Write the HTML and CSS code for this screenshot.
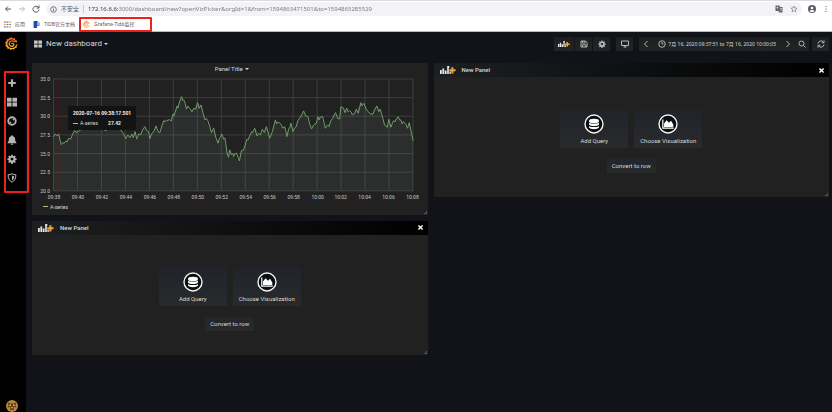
FILE: index.html
```html
<!DOCTYPE html>
<html lang="zh-CN">
<head>
<meta charset="utf-8">
<title>New dashboard - Grafana</title>
<link rel="stylesheet" href="styles.css">
</head>
<body>
<svg class="defs" aria-hidden="true">
  <symbol id="add-panel" viewBox="0 0 20 10">
    <path fill="#e8e8e8" d="M0 5h2.200v5H0zM3 3h2.200v7H3zM6 5.500h2.200V10H6zM9 2h2v8H9zM11.800 7h1.700v3h-1.700z"/>
    <path fill="#f0a630" d="M14.200 1.500h2.600v2.700h2.700v2.400h-2.700v2.700h-2.600V6.600h-2.600V4.200h2.600z"/>
    <path fill="#e8e8e8" d="M9 0h2.600v2.600H9z"/>
  </symbol>
  <symbol id="grafana" viewBox="0 0 24 24">
    <path fill="url(#flame)" d="M12 0l2.500 2.800L18 1.800l1 3.600 3.600 1.400-1 3.400L24 13l-2.500 2.700.5 3.500-3.500.9-1.700 3.200-3.200-1.100L10.500 24l-2.400-2.600-3.600.4-.8-3.500L.6 16.500l1.200-3.300L0 10l2.800-2.200.2-3.600 3.600-.3L8.500.8l2.400 1z"/>
    <circle class="logo-cut" cx="12.500" cy="12.500" r="8"/>
    <path fill="none" stroke="url(#flame)" stroke-width="2.400" d="M18.500 9.500C16 6 10 6.200 8.200 10c-1.700 4 1 7.300 4.300 7.300 2.700 0 4.200-2 3.800-3.900-.5-1.900-2.900-2.400-4.300-.9"/>
    <path class="logo-cut" d="M18.500 10.500L24 9.500v4l-5 .5z"/>
  </symbol>
  <symbol id="database" viewBox="0 0 20 20">
    <circle cx="10" cy="10" r="9" fill="#0d0e10" stroke="#f2f2f2" stroke-width="1.400"/>
    <ellipse cx="10" cy="7" rx="5" ry="2.200" fill="#fff"/>
    <path fill="#fff" d="M5 8.600c1.500 1.600 8.500 1.600 10 0v2c-1.500 2-8.500 2-10 0zM5 11.900c1.500 1.600 8.500 1.600 10 0v1.700c-1.500 2.200-8.500 2.200-10 0z"/>
  </symbol>
  <symbol id="graph" viewBox="0 0 20 20">
    <circle cx="10" cy="10" r="9" fill="#0d0e10" stroke="#f2f2f2" stroke-width="1.400"/>
    <path fill="#fff" d="M4.200 5.500h1.200v8h10.400v1.200H4.200z"/>
    <path fill="#fff" d="M6 12.900V9.500l2.600-3.200 2.400 2.500 2-2 2.300 3.600v2.500z"/>
  </symbol>
  <symbol id="gear" viewBox="0 0 16 16">
    <path fill="currentColor" fill-rule="evenodd" d="M6.800 1h2.400l.4 2 1.100.5 1.700-1.200 1.700 1.700-1.200 1.700.5 1.100 2 .4v2.400l-2 .4-.5 1.100 1.200 1.700-1.700 1.700-1.700-1.200-1.100.5-.4 2H6.800l-.4-2-1.100-.5-1.700 1.200-1.700-1.700 1.200-1.700-.5-1.100-2-.4V7.200l2-.4.5-1.100L1.900 4l1.700-1.700 1.700 1.200L6.400 3zM8 5.800a2.300 2.300 0 1 0 0 4.600 2.300 2.300 0 0 0 0-4.600z"/>
  </symbol>
  <symbol id="dashboards" viewBox="0 0 16 16">
    <path fill="currentColor" d="M0 1h7.300v6.400H0zM8.700 1H16v6.400H8.700zM0 8.800h7.300V15H0zM8.700 8.800H16V15H8.700z"/>
  </symbol>
  <linearGradient id="flame" gradientUnits="userSpaceOnUse" x1="0" y1="24" x2="0" y2="0">
    <stop offset="0" stop-color="#fbc41c"/><stop offset="1" stop-color="#f05a28"/>
  </linearGradient>
</svg>

<header class="browser">
  <div class="address-row">
    <button class="tool" aria-label="后退"><svg viewBox="0 0 16 16"><path d="M14 8H3M8 3L3 8l5 5"/></svg></button>
    <button class="tool tool-off" aria-label="前进"><svg viewBox="0 0 16 16"><path d="M2 8h11M8 3l5 5-5 5"/></svg></button>
    <button class="tool" aria-label="刷新"><svg viewBox="0 0 16 16"><path d="M13 5a6 6 0 1 0 1 4M14 1v5H9"/></svg></button>
    <div class="address">
      <svg class="info" viewBox="0 0 16 16"><circle cx="8" cy="8" r="6.500"/><path d="M8 7v5M8 4v1.500"/></svg>
      <span class="insecure">不安全</span>
      <input class="url" aria-label="地址" value="172.16.6.6:3000/dashboard/new?openVizPicker&amp;orgId=1&amp;from=1594863471501&amp;to=1594865285529">
      <button class="tool" aria-label="翻译"><svg viewBox="0 0 16 16"><path fill="#666" stroke="none" d="M1 1h8l1 3h5v11H8l-1-3H1z"/><path stroke="#fff" d="M3 5h4M5 3v5M10 7h4M12 7v5"/></svg></button>
      <button class="tool" aria-label="收藏"><svg viewBox="0 0 16 16"><path d="M8 2l1.800 4 4.200.4-3.200 2.800 1 4.300L8 11.200l-3.800 2.300 1-4.300L2 6.400 6.200 6z"/></svg></button>
    </div>
    <button class="tool" aria-label="用户"><svg viewBox="0 0 16 16"><circle cx="8" cy="8" r="8" fill="#5a5c66" stroke="none"/><circle cx="8" cy="6" r="2.600" fill="#fff" stroke="none"/><path fill="#fff" stroke="none" d="M3 12c1-3 9-3 10 0-2 3-8 3-10 0z"/></svg></button>
    <button class="tool" aria-label="菜单"><svg viewBox="0 0 16 16"><path fill="#555" stroke="none" d="M7 2h2v2H7zM7 7h2v2H7zM7 12h2v2H7z"/></svg></button>
  </div>
  <nav class="bookmarks">
    <a href="#"><svg viewBox="0 0 12 12"><path fill="#e0483e" d="M0 1h3v2H0zM4.500 1h3v2h-3z"/><path fill="#e9a23b" d="M9 1h3v2H9zM0 5h3v2H0z"/><path fill="#4a9a5a" d="M4.500 5h3v2h-3zM0 9h3v2H0z"/><path fill="#4c7bd9" d="M9 5h3v2H9zM4.500 9h3v2h-3z"/><path fill="#e9a23b" d="M9 9h3v2H9z"/></svg>应用</a>
    <a href="#"><svg viewBox="0 0 12 12"><path fill="#1f4fa8" d="M1 0h7v3h3v5H7v4H1z"/><path fill="#8fb8f2" d="M7 3h4v4H7z"/></svg>TiDB官方文档</a>
    <a href="#" class="marked"><svg class="on-white"><use href="#grafana"/></svg>Grafana-Tidb监控</a>
  </nav>
</header>

<div class="app">
  <aside class="sidebar">
    <a class="brand" href="#" aria-label="Grafana"><svg><use href="#grafana"/></svg></a>
    <nav class="side-nav">
      <a href="#" aria-label="Create"><svg viewBox="0 0 16 16"><path fill="currentColor" d="M6.300 2h3.400v4.300H14v3.400H9.700V14H6.300V9.700H2V6.300h4.300z"/></svg></a>
      <a href="#" aria-label="Dashboards"><svg><use href="#dashboards"/></svg></a>
      <a href="#" aria-label="Explore"><svg viewBox="0 0 16 16"><circle cx="8" cy="8" r="6" fill="none" stroke="currentColor" stroke-width="3"/><path fill="currentColor" d="M12.500 3.500L9.700 9.700l-6.200 2.800 2.800-6.200z"/><path fill="#000" d="M8 4.800L11.200 8 8 11.200 4.800 8z"/></svg></a>
      <a href="#" aria-label="Alerting"><svg viewBox="0 0 16 16"><path fill="currentColor" d="M7.200 0h1.600v1.400C11.500 1.800 13 4 13 6.500c0 3 .8 4.300 2 5.500v1H1v-1c1.200-1.200 2-2.500 2-5.500C3 4 4.500 1.800 7.200 1.400zM6 14h4c0 2.500-4 2.500-4 0z"/></svg></a>
      <a href="#" aria-label="Configuration"><svg><use href="#gear"/></svg></a>
      <a href="#" aria-label="Server Admin"><svg viewBox="0 0 16 16"><path fill="none" stroke="currentColor" stroke-width="1.600" d="M8 1.200c2 1.200 4 1.600 6.200 1.600 0 6-1.700 9.500-6.200 12-4.500-2.500-6.200-6-6.200-12C4 2.800 6 2.400 8 1.200z"/><path fill="currentColor" d="M8 4c1 .6 2 .9 3.500 1-.2 3.500-1.200 5.500-3.500 7z"/></svg></a>
    </nav>
    <a class="avatar" href="#" aria-label="Profile"><svg viewBox="0 0 24 24"><circle cx="12" cy="12" r="12" fill="#b5873a"/><path fill="#5b3b12" d="M4 5l5 2h6l5-2-1 6 2 5-5-3-1 4 1 4-4-2-4 2 1-4-1-4-5 3 2-5z"/><path fill="#ecc46c" d="M7 9h3v3H7zM14 9h3v3h-3zM10 14h4l-2 3z"/></svg></a>
  </aside>

  <main class="main">
    <div class="navbar">
      <button class="title"><svg><use href="#dashboards"/></svg>New dashboard<span class="caret"></span></button>
      <div class="group joined">
        <button class="nav-btn wide" aria-label="Add panel"><svg class="add"><use href="#add-panel"/></svg></button>
        <button class="nav-btn" aria-label="Save dashboard"><svg viewBox="0 0 16 16"><path d="M2 2h9l3 3v9H2zM5 2v4h5V2M4.500 14V9.500h7V14"/></svg></button>
        <button class="nav-btn" aria-label="Settings"><svg class="solid"><use href="#gear"/></svg></button>
      </div>
      <button class="nav-btn" aria-label="Cycle view mode"><svg viewBox="0 0 16 16"><path d="M1 2h14v9H1zM5 14h6M8 11v3"/></svg></button>
      <div class="group">
        <button class="nav-btn slim" aria-label="Shift back"><svg viewBox="0 0 16 16"><path d="M11 2L5 8l6 6"/></svg></button>
        <button class="nav-btn time"><svg viewBox="0 0 16 16"><circle cx="8" cy="8" r="6.500"/><path d="M8 4v4h3"/></svg>7月 16, 2020 09:37:51 to 7月 16, 2020 10:00:05</button>
        <button class="nav-btn slim" aria-label="Shift forward"><svg viewBox="0 0 16 16"><path d="M5 2l6 6-6 6"/></svg></button>
        <button class="nav-btn slim" aria-label="Zoom out"><svg viewBox="0 0 16 16"><circle cx="7" cy="7" r="5"/><path d="M11 11l4 4"/></svg></button>
      </div>
      <button class="nav-btn last" aria-label="Refresh"><svg viewBox="0 0 16 16"><path d="M2 7a6 6 0 0 1 11-2.500M14 1v4.500H9.500M14 9A6 6 0 0 1 3 11.500M2 15v-4.500h4.500"/></svg></button>
    </div>

    <div class="grid">
      <div class="column">
        <section class="panel chart-panel">
          <h2 class="panel-title">Panel Title<span class="caret"></span></h2>
          <svg class="chart" viewBox="32 75 396 126" role="img" aria-label="A-series">
            <path class="grid-lines" d="M53.500 79H414M53.500 97.700H414M53.500 116.300H414M53.500 135H414M53.500 153.700H414M53.500 172.300H414M53.500 191H414M53.500 79V191M77.500 79V191M101.500 79V191M125.500 79V191M149.500 79V191M173.500 79V191M197.500 79V191M221.500 79V191M245.500 79V191M269.500 79V191M293.500 79V191M317.500 79V191M341.500 79V191M365.500 79V191M389.500 79V191M413.500 79V191"/>
            <path class="crosshair" d="M58.500 79V191"/>
            <path class="area" d="M53 191V137L55 134 57.300 136 60 140 61.300 144.700 66 141 70.700 139.300 74.700 130.700 86 126 106 131 115 128 123.300 133.300 126 138.700 130 138 136.700 139.300 142.700 130 145 126.700 150 138.700 156 126 160 132.700 164 120.700 171.300 121.300 177.300 106 181.700 96.700 186.700 109.300 192 112 197.700 102.700 201.300 105 205.300 120 211.700 132.700 214 128.300 218.300 143.300 222 134 226 143.300 228.700 157.300 230 150 234 156.700 239.700 161 241.700 150.700 247.300 139.300 255 128.300 260.700 135 266.700 126.700 270 138.300 275.700 120 283.300 128.300 287.300 136.700 291.300 123.300 293.300 131.700 304 111 312 129 320.700 117 325.700 128.300 336 112.700 340 119 341.300 106.700 352.700 115 361.300 102.700 370.700 114 377.300 106 387.700 127.300 389.300 119.300 391.300 127.300 398.700 116.700 408 128.300 409.700 122.700 413.700 141V191z"/>
            <path class="series" d="M53 137L55 134 57.300 136 58.700 134 60 140 61.300 144.700 62.700 142.700 64.300 143.300 66 141 67.300 142 68.700 138.300 70.700 139.300 72.700 134 74.700 130.700 76 132.700 78.700 131.300 82 129 86 126 90 128 95 124 100 127 106 131 110 126 115 128 120.700 130 123.300 133.300 126 138.700 128 135 130 138 132 134 133.300 138 135.300 131.700 136.700 139.300 138.700 134 140.700 135 142.700 130 145 126.700 146.700 130.700 148.700 131.700 150 138.700 152 133.300 154 131.700 156 126 158.300 131.700 160 132.700 162 126 164 120.700 165 122 166.700 120 168 121 169.300 119.300 171.300 121.300 173.300 114 174 116 175.300 112.700 177.300 106 178 108 179.300 103.300 181.700 96.700 183.300 100.700 184 100 185.300 103.300 186.700 109.300 188 106 189.300 108 190.500 109 192 112 194 108.300 196 109.300 197.700 102.700 199.300 108.300 201.300 105 203.300 113.300 205.300 120 206.500 118.500 208 120.700 210 126.700 211.700 132.700 214 128.300 216 137.300 218.300 143.300 219.500 139 220.700 137.300 222 134 224 139.300 225 138 226 143.300 227.300 153.300 228.700 157.300 230 150 231.700 155 233 153.500 234 156.700 235 154 236.700 153.300 238.700 158.300 239.700 161 241.700 150.700 243 151 245 147.300 246 143 247.300 139.300 248.300 140 250 136 252 131.700 253 132.500 255 128.300 257.300 136 259 133.500 260.700 135 262.700 129.300 264.700 132.700 266.700 126.700 268 131 270 138.300 272.700 131.700 275.700 120 277 124 278.300 122 280.700 123.700 282 126 283.300 128.300 285 126.700 287.300 136.700 289 129 290 128 291.300 123.300 293.300 131.700 295 128 296.700 126.700 298 121 300 118.300 302 115 304 111 306 116 308.300 116.700 310 124 312 129 314 125 316.700 123.300 318.300 116.700 319.500 120 320.700 117 323 116.700 325.700 128.300 328 125 329.300 126.700 331.300 120.700 333.300 118.300 334.500 115 336 112.700 338 118.300 340 119 341.300 106.700 344 108.300 345.300 112.700 347.300 108.300 348.500 112 350 110.700 351.500 112 352.700 115 355.300 113.300 356.700 109.300 358.700 113.300 360 108 361.300 102.700 362.700 106 364.300 103.300 366.700 109.300 368.700 111.700 370.700 114 373.300 114.300 375.300 109.300 377.300 106 379.300 111.700 380.700 109.300 383.300 118.300 385 125 387.700 127.300 389.300 119.300 391.300 127.300 394 120.700 395.500 122 396.700 119 398.700 116.700 400 120 401.300 120 402.700 124 404 121.700 406.700 125 408 128.300 409.700 122.700 411.700 131.700 413.700 141"/>
            <g class="y-labels">
              <text x="50" y="81">35.0</text><text x="50" y="100">32.5</text><text x="50" y="118">30.0</text><text x="50" y="137">27.5</text><text x="50" y="156">25.0</text><text x="50" y="174">22.5</text><text x="50" y="193">20.0</text>
            </g>
            <g class="x-labels">
              <text x="54" y="199">09:38</text><text x="78" y="199">09:40</text><text x="102" y="199">09:42</text><text x="126" y="199">09:44</text><text x="150" y="199">09:46</text><text x="174" y="199">09:48</text><text x="198" y="199">09:50</text><text x="222" y="199">09:52</text><text x="246" y="199">09:54</text><text x="270" y="199">09:56</text><text x="294" y="199">09:58</text><text x="318" y="199">10:00</text><text x="341" y="199">10:02</text><text x="365" y="199">10:04</text><text x="389" y="199">10:06</text><text x="413" y="199">10:08</text>
            </g>
          </svg>
          <div class="legend"><i class="dash"></i>A-series</div>
          <div class="tooltip">
            <strong>2020-07-16 09:38:17.501</strong>
            <div class="tooltip-row"><i class="dash"></i>A-series<b>27.42</b></div>
          </div>
        </section>

        <section class="panel">
          <header class="panel-head"><svg class="add"><use href="#add-panel"/></svg><h2>New Panel</h2><button class="close" aria-label="Close"><svg viewBox="0 0 10 10"><path d="M2 2l6 6M8 2L2 8"/></svg></button></header>
          <div class="panel-body">
            <div class="choices">
              <button class="choice"><svg><use href="#database"/></svg>Add Query</button>
              <button class="choice"><svg><use href="#graph"/></svg>Choose Visualization</button>
            </div>
            <button class="convert">Convert to row</button>
          </div>
        </section>
      </div>

      <div class="column">
        <section class="panel">
          <header class="panel-head"><svg class="add"><use href="#add-panel"/></svg><h2>New Panel</h2><button class="close" aria-label="Close"><svg viewBox="0 0 10 10"><path d="M2 2l6 6M8 2L2 8"/></svg></button></header>
          <div class="panel-body">
            <div class="choices">
              <button class="choice"><svg><use href="#database"/></svg>Add Query</button>
              <button class="choice"><svg><use href="#graph"/></svg>Choose Visualization</button>
            </div>
            <button class="convert">Convert to row</button>
          </div>
        </section>
      </div>
    </div>
  </main>
</div>
</body>
</html>
```
FILE: styles.css
```css
* { box-sizing: border-box; }

body {
  margin: 0;
  min-height: 100vh;
  display: flex;
  flex-direction: column;
  background: #121319;
  color: #d8d9da;
  font: 6px/8px Roboto, "Noto Sans CJK SC", sans-serif;
}

button {
  margin: 0;
  padding: 0;
  border: 0;
  background: none;
  color: inherit;
  font: inherit;
  cursor: pointer;
}

a { color: inherit; text-decoration: none; }
h2 { margin: 0; font: inherit; font-weight: 500; }
svg { display: block; flex: none; }
.defs { position: absolute; width: 0; height: 0; }

/* Browser chrome */
.browser {
  background: #fff;
  color: #555;
  font-family: "Noto Sans", "Noto Sans CJK SC", sans-serif;
  border-bottom: 1px solid #b8b8b8;
  border-top: 1px solid #dcdce0;
}
.address-row { display: flex; align-items: center; gap: 6px; height: 16px; padding: 0 2px 0 4px; }
.tool svg { width: 8px; height: 8px; fill: none; stroke: #555; stroke-width: 2; }
.tool-off svg { stroke: #bbb; }
.address {
  flex: 1;
  display: flex;
  align-items: center;
  gap: 4px;
  height: 14px;
  padding: 0 4px;
  border-radius: 7px;
  background: #f3f2f6;
}
.address .tool svg { stroke-width: 1; }
.address .tool { margin-left: 3px; }
.info { width: 7px; height: 7px; fill: none; stroke: #666; stroke-width: 2; }
.insecure { padding-right: 4px; border-right: 1px solid #ccc; white-space: nowrap; }
.url {
  flex: 1;
  min-width: 0;
  padding: 0;
  border: 0;
  font: inherit;
  color: transparent;
  background: linear-gradient(90deg, #333 30px, #777 30px);
  background-clip: text;
}
.bookmarks { display: flex; align-items: center; height: 14px; padding-left: 4px; gap: 8px; font-size: 5px; }
.bookmarks a { display: flex; align-items: center; gap: 4px; white-space: nowrap; }
.bookmarks svg { width: 7px; height: 7px; }
.bookmarks .marked {
  height: 15px;
  margin-left: -4px;
  padding: 0 16px 0 2px;
  border: 2px solid #f0201c;
  border-radius: 1px;
}
.logo-cut { fill: var(--logo-cut, #000); }
.on-white { --logo-cut: #fff; }

/* Application shell */
.app { flex: 1; display: flex; }
.sidebar { display: flex; flex-direction: column; width: 26px; padding-top: 5px; background: #000; }
.brand { margin-left: 5px; }
.brand svg { width: 13px; height: 13px; }
.side-nav {
  display: flex;
  flex-direction: column;
  gap: 9px;
  width: 25px;
  margin: 21px 0 0 4px;
  padding: 5px 0 8px 1px;
  border: 2px solid #f0201c;
  border-radius: 1px;
  color: #b4b5b7;
}
.side-nav svg { width: 10px; height: 10px; }
.avatar { margin: auto 0 0 6px; }
.avatar svg { width: 12px; height: 12px; }

.main { flex: 1; min-width: 0; padding: 0 3px 0 6px; }
.navbar { display: flex; align-items: center; gap: 6px; height: 24px; }
.title { display: flex; align-items: center; gap: 4px; margin-right: auto; padding-left: 2px; font-size: 8px; line-height: 10px; }
.title svg { width: 8px; height: 8px; color: #c6c7c9; }
.caret { width: 3px; border: 2px solid transparent; border-top-color: currentColor; border-bottom: 0; }
.title .caret { margin-left: -2px; }
.group { display: flex; }
.joined { gap: 1px; }
.nav-btn {
  display: flex;
  align-items: center;
  justify-content: center;
  gap: 2px;
  width: 17px;
  height: 14px;
  border-radius: 1px;
  background: linear-gradient(#1c1f22, #242425);
  white-space: nowrap;
}
.nav-btn svg { width: 8px; height: 8px; fill: none; stroke: #b4b5b7; stroke-width: 2; }
.nav-btn .solid { stroke: none; color: #b4b5b7; }
.nav-btn .add { width: 12px; height: 8px; stroke: none; }
.nav-btn.wide { width: 20px; }
.nav-btn.slim { width: 14px; }
.nav-btn.time { width: auto; padding: 0 5px; font-family: "Noto Sans", "Noto Sans CJK SC", sans-serif; font-size: 5px; }
.nav-btn.last { margin-left: -3px; }

/* Panels */
.grid { display: grid; grid-template-columns: 1fr 1fr; gap: 6px; padding-top: 7px; }
.column { display: flex; flex-direction: column; gap: 6px; min-width: 0; }
.panel { position: relative; background: #212122; border-radius: 1px; }
.panel::after {
  content: "";
  position: absolute;
  right: 1px;
  bottom: 1px;
  width: 2px;
  height: 2px;
  border: solid #555;
  border-width: 0 1px 1px 0;
}
.panel-title { display: flex; align-items: center; justify-content: center; gap: 2px; height: 12px; padding-left: 4px; font-weight: 400; }
.chart { width: 100%; height: auto; overflow: visible; }
.grid-lines { fill: none; stroke: #3d3e3d; }
.crosshair { stroke: #3f1a1b; }
.area { fill: rgba(140, 170, 135, 0.1); }
.series { fill: none; stroke: #6f9c68; stroke-width: 1; }
.y-labels, .x-labels { fill: #c8c9ca; font-size: 5px; }
.y-labels { text-anchor: end; }
.x-labels { text-anchor: middle; }
.legend { display: flex; align-items: center; gap: 2px; padding: 2px 0 4px 11px; font-size: 5px; }
.dash { width: 5px; height: 1px; background: #a5c78f; }
.tooltip {
  position: absolute;
  left: 36px;
  top: 43px;
  padding: 3px 5px;
  border-radius: 1px;
  background: #121314;
  font-size: 5px;
}
.tooltip strong { display: block; font-weight: 700; white-space: nowrap; color: #eee; }
.tooltip-row { display: flex; align-items: center; gap: 2px; padding-top: 2px; }
.tooltip-row b { margin-left: 8px; color: #eee; }

.panel-head {
  display: flex;
  align-items: center;
  height: 14px;
  padding: 0 4px 0 6px;
  gap: 6px;
  background: linear-gradient(90deg, #1d1f21, #0b0c0d 60%, #000);
}
.panel-head .add { width: 16px; height: 8px; }
.close { margin-left: auto; }
.close svg { width: 7px; height: 7px; stroke: #fff; stroke-width: 2; }
.panel-body { display: flex; flex-direction: column; align-items: center; gap: 11px; padding: 33px 0 24px; }
.choices { display: flex; gap: 6px; }
.choice {
  display: flex;
  flex-direction: column;
  align-items: center;
  gap: 3px;
  width: 68px;
  padding: 4px 0 3px;
  background: linear-gradient(#20242a, #292a2c);
}
.choice svg { width: 20px; height: 20px; }
.convert { padding: 3px 5px; background: linear-gradient(#22252a, #292a2c); }
```
